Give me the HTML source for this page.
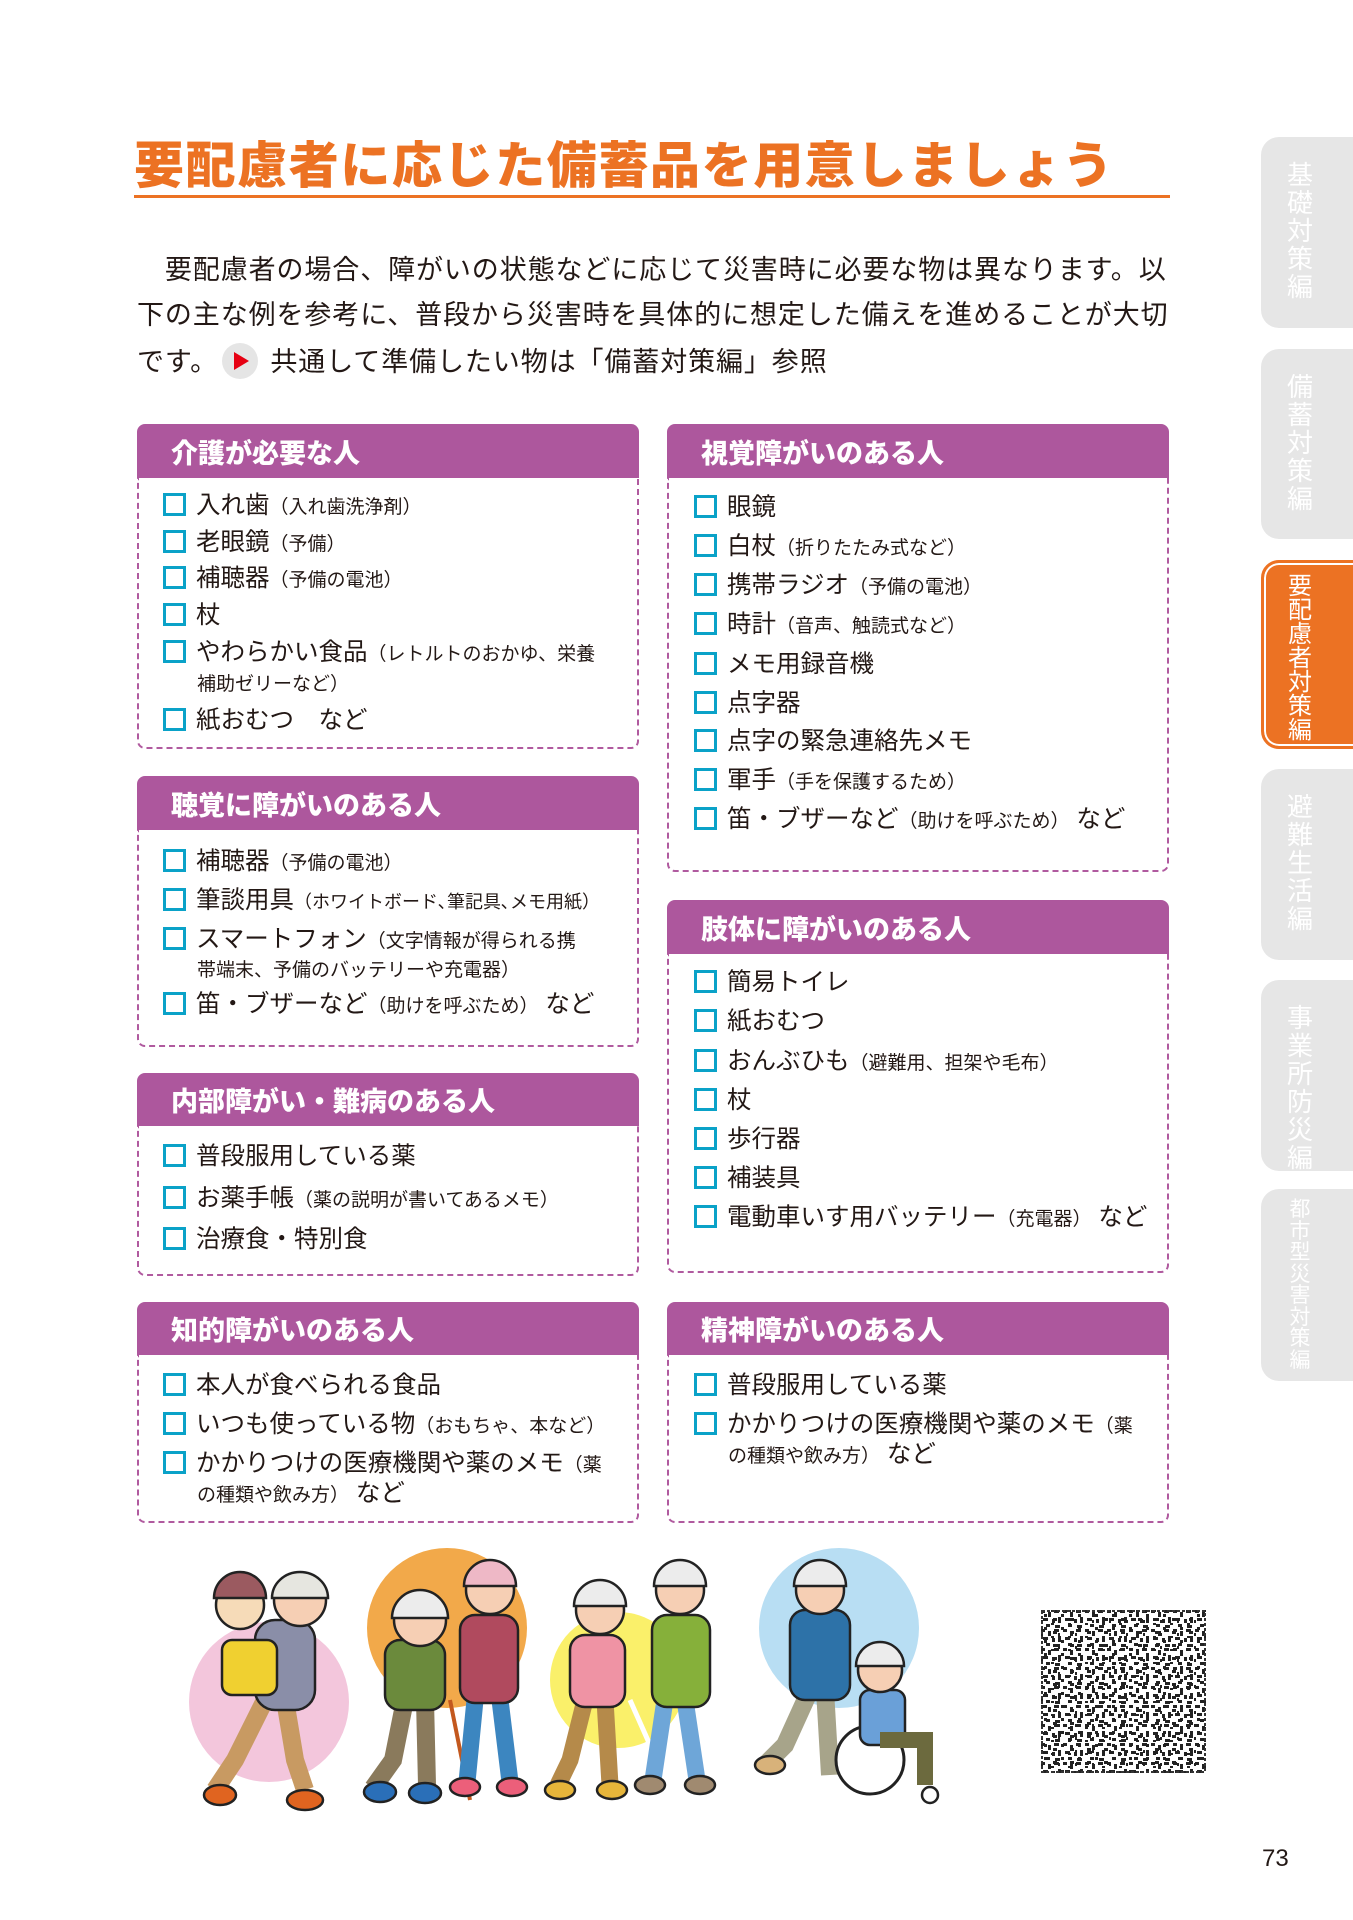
<!DOCTYPE html>
<html><head><meta charset="utf-8">
<style>
*{margin:0;padding:0;box-sizing:border-box}
body{width:1353px;height:1920px;position:relative;background:#fff;font-family:"Liberation Sans","Noto Sans CJK JP",sans-serif;color:#231815;overflow:hidden}
.abs{position:absolute}
.title{left:134px;top:136px;font-size:50px;font-weight:900;color:#ec7223;letter-spacing:1.6px;white-space:nowrap;line-height:60px}
.uline{left:134px;top:195px;width:1036px;height:3px;background:#ec7223}
.para{left:137px;font-size:27px;white-space:nowrap;letter-spacing:0.9px}
.box{position:absolute;border:2px dashed #b05a9f;border-top:none;border-radius:0 0 8px 8px}
.hd{position:absolute;background:#ad579d;border-radius:8px 8px 0 0;color:#fff;font-weight:900;font-size:27px;padding-left:34px;display:flex;align-items:center}
.it{position:absolute;font-size:24.5px;white-space:nowrap;line-height:30px}
.it i{display:inline-block;width:23px;height:23px;border:3.5px solid #0aa2c8;vertical-align:-3px;margin-right:10px;background:#fff}
.it small{font-size:19px}
.sub{position:absolute;font-size:19px;white-space:nowrap}
.tab{position:absolute;left:1261px;width:110px;background:#e6e6e6;border-radius:18px 0 0 18px}
.tab span{position:absolute;left:25px;top:24px;color:#fff;font-size:26px;line-height:28px;width:28px;word-break:break-all;text-align:center}
.tab.on{background:#ec7223;border:3px solid #ec7223;box-shadow:inset 0 0 0 2px #fff}
.tab.on span{top:12px;left:22px;font-size:24px;line-height:24px}
</style></head><body>

<div class="abs title">要配慮者に応じた備蓄品を用意しましょう</div>
<div class="abs uline"></div>

<div class="abs para" style="top:248px">　要配慮者の場合、障がいの状態などに応じて災害時に必要な物は異なります。以</div>
<div class="abs para" style="top:293px">下の主な例を参考に、普段から災害時を具体的に想定した備えを進めることが大切</div>
<div class="abs para" style="top:340px">です。<span style="display:inline-block;width:36px;height:36px;border-radius:50%;background:#e5e5e5;vertical-align:-8px;position:relative;margin:0 4px"><span style="position:absolute;left:12px;top:9px;border-left:15px solid #e60012;border-top:9px solid transparent;border-bottom:9px solid transparent"></span></span> 共通して準備したい物は「備蓄対策編」参照</div>

<!-- tabs -->
<div class="tab" style="top:137px;height:191px"><span>基礎対策編</span></div>
<div class="tab" style="top:349px;height:190px"><span>備蓄対策編</span></div>
<div class="tab on" style="top:560px;height:189px"><span>要配慮者対策編</span></div>
<div class="tab" style="top:769px;height:191px"><span>避難生活編</span></div>
<div class="tab" style="top:980px;height:191px"><span>事業所防災編</span></div>
<div class="tab" style="top:1189px;height:192px"><span style="top:10px;left:27px;width:24px;font-size:21px;line-height:21.5px">都市型災害対策編</span></div>

<!-- left column -->
<div class="hd" style="left:137px;top:424px;width:502px;height:54px">介護が必要な人</div>
<div class="box" style="left:137px;top:478px;width:502px;height:271px"></div>
<div class="it" style="left:163px;top:491px"><i></i>入れ歯<small>（入れ歯洗浄剤）</small></div>
<div class="it" style="left:163px;top:528px"><i></i>老眼鏡<small>（予備）</small></div>
<div class="it" style="left:163px;top:564px"><i></i>補聴器<small>（予備の電池）</small></div>
<div class="it" style="left:163px;top:601px"><i></i>杖</div>
<div class="it" style="left:163px;top:638px"><i></i>やわらかい食品<small>（レトルトのおかゆ、栄養</small></div>
<div class="sub" style="left:197px;top:669px">補助ゼリーなど）</div>
<div class="it" style="left:163px;top:706px"><i></i>紙おむつ　など</div>

<div class="hd" style="left:137px;top:776px;width:502px;height:54px">聴覚に障がいのある人</div>
<div class="box" style="left:137px;top:830px;width:502px;height:217px"></div>
<div class="it" style="left:163px;top:847px"><i></i>補聴器<small>（予備の電池）</small></div>
<div class="it" style="left:163px;top:886px"><i></i>筆談用具<small style="font-size:18px">（ホワイトボード､筆記具､メモ用紙）</small></div>
<div class="it" style="left:163px;top:925px"><i></i>スマートフォン<small>（文字情報が得られる携</small></div>
<div class="sub" style="left:197px;top:955px">帯端末、予備のバッテリーや充電器）</div>
<div class="it" style="left:163px;top:990px"><i></i>笛・ブザーなど<small>（助けを呼ぶため）</small> など</div>

<div class="hd" style="left:137px;top:1073px;width:502px;height:53px">内部障がい・難病のある人</div>
<div class="box" style="left:137px;top:1126px;width:502px;height:150px"></div>
<div class="it" style="left:163px;top:1142px"><i></i>普段服用している薬</div>
<div class="it" style="left:163px;top:1184px"><i></i>お薬手帳<small>（薬の説明が書いてあるメモ）</small></div>
<div class="it" style="left:163px;top:1225px"><i></i>治療食・特別食</div>

<div class="hd" style="left:137px;top:1302px;width:502px;height:53px">知的障がいのある人</div>
<div class="box" style="left:137px;top:1355px;width:502px;height:168px"></div>
<div class="it" style="left:163px;top:1371px"><i></i>本人が食べられる食品</div>
<div class="it" style="left:163px;top:1410px"><i></i>いつも使っている物<small>（おもちゃ、本など）</small></div>
<div class="it" style="left:163px;top:1449px"><i></i>かかりつけの医療機関や薬のメモ<small>（薬</small></div>
<div class="it" style="left:197px;top:1479px"><small>の種類や飲み方）</small> など</div>

<!-- right column -->
<div class="hd" style="left:667px;top:424px;width:502px;height:54px">視覚障がいのある人</div>
<div class="box" style="left:667px;top:478px;width:502px;height:394px"></div>
<div class="it" style="left:694px;top:493px"><i></i>眼鏡</div>
<div class="it" style="left:694px;top:532px"><i></i>白杖<small>（折りたたみ式など）</small></div>
<div class="it" style="left:694px;top:571px"><i></i>携帯ラジオ<small>（予備の電池）</small></div>
<div class="it" style="left:694px;top:610px"><i></i>時計<small>（音声、触読式など）</small></div>
<div class="it" style="left:694px;top:650px"><i></i>メモ用録音機</div>
<div class="it" style="left:694px;top:689px"><i></i>点字器</div>
<div class="it" style="left:694px;top:727px"><i></i>点字の緊急連絡先メモ</div>
<div class="it" style="left:694px;top:766px"><i></i>軍手<small>（手を保護するため）</small></div>
<div class="it" style="left:694px;top:805px"><i></i>笛・ブザーなど<small>（助けを呼ぶため）</small> など</div>

<div class="hd" style="left:667px;top:900px;width:502px;height:54px">肢体に障がいのある人</div>
<div class="box" style="left:667px;top:954px;width:502px;height:319px"></div>
<div class="it" style="left:694px;top:968px"><i></i>簡易トイレ</div>
<div class="it" style="left:694px;top:1007px"><i></i>紙おむつ</div>
<div class="it" style="left:694px;top:1047px"><i></i>おんぶひも<small>（避難用、担架や毛布）</small></div>
<div class="it" style="left:694px;top:1086px"><i></i>杖</div>
<div class="it" style="left:694px;top:1125px"><i></i>歩行器</div>
<div class="it" style="left:694px;top:1164px"><i></i>補装具</div>
<div class="it" style="left:694px;top:1203px"><i></i>電動車いす用バッテリー<small>（充電器）</small> など</div>

<div class="hd" style="left:667px;top:1302px;width:502px;height:53px">精神障がいのある人</div>
<div class="box" style="left:667px;top:1355px;width:502px;height:168px"></div>
<div class="it" style="left:694px;top:1371px"><i></i>普段服用している薬</div>
<div class="it" style="left:694px;top:1410px"><i></i>かかりつけの医療機関や薬のメモ<small>（薬</small></div>
<div class="it" style="left:728px;top:1440px"><small>の種類や飲み方）</small> など</div>

<!-- illustrations -->
<svg class="abs" style="left:0;top:1540px" width="1000" height="290" viewBox="0 1540 1000 290">
<g stroke="#222" stroke-width="2.5">
<circle cx="269" cy="1702" r="80" fill="#f3c6dc" stroke="none"/>
<circle cx="447" cy="1628" r="80" fill="#f2a94a" stroke="none"/>
<circle cx="618" cy="1680" r="68" fill="#faf06a" stroke="none"/>
<circle cx="839" cy="1628" r="80" fill="#b8def3" stroke="none"/>
<path d="M265 1700 l-30 60 l-20 30 M285 1700 l10 60 l10 30" stroke="#c89a62" stroke-width="18" fill="none"/>
<ellipse cx="220" cy="1795" rx="16" ry="10" fill="#e06420"/><ellipse cx="305" cy="1800" rx="18" ry="10" fill="#e06420"/>
<rect x="255" y="1620" width="60" height="90" rx="20" fill="#8a8ea8"/>
<rect x="222" y="1640" width="55" height="55" rx="10" fill="#f0d030"/>
<circle cx="300" cy="1600" r="26" fill="#f6cfb4"/><path d="M272 1598 a28 26 0 0 1 56 0 z" fill="#e6e6e0"/>
<circle cx="240" cy="1605" r="24" fill="#f6dbb8"/><path d="M214 1598 a26 26 0 0 1 52 0 z" fill="#9b5a60"/>
<path d="M405 1700 l-12 60 l-20 28 M425 1700 l2 85" stroke="#8a7a5c" stroke-width="18" fill="none"/>
<ellipse cx="380" cy="1792" rx="16" ry="10" fill="#2a6fb8"/><ellipse cx="425" cy="1793" rx="16" ry="10" fill="#2a6fb8"/>
<rect x="385" y="1640" width="60" height="70" rx="15" fill="#6b8a3c"/>
<circle cx="420" cy="1620" r="26" fill="#f6cfb4"/><path d="M392 1618 a28 28 0 0 1 56 0 z" fill="#ececec"/>
<line x1="450" y1="1700" x2="470" y2="1800" stroke="#c3581e" stroke-width="4"/>
<path d="M475 1700 l-8 82 M500 1700 l10 82" stroke="#3c86c0" stroke-width="17" fill="none"/>
<ellipse cx="465" cy="1787" rx="15" ry="9" fill="#ec5f7a"/><ellipse cx="512" cy="1787" rx="15" ry="9" fill="#ec5f7a"/>
<rect x="460" y="1615" width="58" height="88" rx="15" fill="#b04a5e"/>
<circle cx="490" cy="1590" r="24" fill="#f6cfb4"/><path d="M464 1586 a26 26 0 0 1 52 0 z" fill="#eeb8c6"/>
<path d="M585 1700 l-15 60 l-12 25 M605 1700 l5 85" stroke="#b58a4a" stroke-width="17" fill="none"/>
<ellipse cx="560" cy="1790" rx="15" ry="9" fill="#e6b53a"/><ellipse cx="612" cy="1790" rx="15" ry="9" fill="#e6b53a"/>
<rect x="570" y="1635" width="55" height="72" rx="15" fill="#ef93a4"/>
<circle cx="600" cy="1610" r="24" fill="#f6cfb4"/><path d="M574 1606 a26 26 0 0 1 52 0 z" fill="#ececec"/>
<line x1="630" y1="1700" x2="670" y2="1790" stroke="#fff" stroke-width="5"/>
<path d="M665 1700 l-12 80 M685 1700 l12 80" stroke="#6ea6d8" stroke-width="17" fill="none"/>
<ellipse cx="650" cy="1785" rx="15" ry="9" fill="#a08a70"/><ellipse cx="700" cy="1785" rx="15" ry="9" fill="#a08a70"/>
<rect x="652" y="1615" width="58" height="92" rx="15" fill="#86b03a"/>
<circle cx="680" cy="1590" r="24" fill="#f6cfb4"/><path d="M654 1586 a26 26 0 0 1 52 0 z" fill="#ececec"/>
<path d="M810 1690 l-25 55 l-20 20 M825 1690 l5 85" stroke="#a7a48a" stroke-width="18" fill="none"/>
<ellipse cx="770" cy="1765" rx="15" ry="9" fill="#d8b27a"/>
<rect x="790" y="1610" width="60" height="90" rx="15" fill="#2d72a8"/>
<circle cx="820" cy="1590" r="24" fill="#f6cfb4"/><path d="M794 1586 a26 26 0 0 1 52 0 z" fill="#ececec"/>
<circle cx="870" cy="1760" r="34" fill="#fff" stroke-width="3"/>
<rect x="860" y="1690" width="45" height="55" rx="10" fill="#6aa0d8"/>
<path d="M880 1740 h45 v45" stroke="#6c6a3e" stroke-width="16" fill="none"/>
<circle cx="880" cy="1670" r="22" fill="#f6cfb4"/><path d="M856 1666 a24 24 0 0 1 48 0 z" fill="#ececec"/>
<circle cx="930" cy="1795" r="8" fill="#fff"/>
</g>
</svg>

<!-- QR -->
<svg class="abs" style="left:1041px;top:1610px" width="165" height="163" viewBox="0 0 165 163">
<defs>
<pattern id="p1" width="22" height="19" patternUnits="userSpaceOnUse">
<rect x="0" y="0" width="4" height="3" fill="#222"/><rect x="7" y="2" width="3" height="5" fill="#222"/><rect x="13" y="0" width="5" height="3" fill="#222"/><rect x="2" y="8" width="5" height="3" fill="#222"/><rect x="11" y="9" width="3" height="4" fill="#222"/><rect x="17" y="7" width="3" height="6" fill="#222"/><rect x="5" y="14" width="4" height="3" fill="#222"/><rect x="14" y="15" width="5" height="3" fill="#222"/>
</pattern>
<pattern id="p2" width="17" height="13" patternUnits="userSpaceOnUse">
<rect x="3" y="4" width="3" height="3" fill="#222"/><rect x="10" y="0" width="3" height="2" fill="#222"/><rect x="12" y="8" width="4" height="3" fill="#222"/><rect x="0" y="10" width="2" height="3" fill="#222"/>
</pattern>
</defs>
<rect width="165" height="163" fill="#fff"/>
<rect width="165" height="163" fill="url(#p1)"/>
<rect width="165" height="163" fill="url(#p2)"/>
<rect x="1" y="1" width="163" height="161" fill="none" stroke="#333" stroke-width="2" stroke-dasharray="3 2"/>
</svg>

<div class="abs" style="left:1262px;top:1845px;font-size:24px">73</div>
</body></html>
